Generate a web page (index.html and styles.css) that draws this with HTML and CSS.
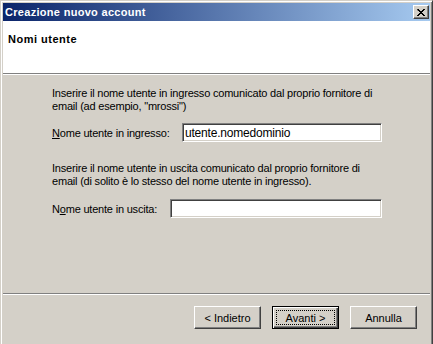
FILE: index.html
```html
<!DOCTYPE html>
<html lang="it">
  <head>
    <meta charset="UTF-8" />
    <title>Creazione nuovo account</title>
    <link rel="stylesheet" href="styles.css">
  </head>
  <body>
    <div class="window">
      <!-- barra del titolo -->
      <div class="titlebar">
        <span class="title">Creazione nuovo account</span>
        <button type="button" class="close-button">
          <svg width="8" height="7" viewBox="0 0 8 7">
            <path d="M0 0h2v1h1v1h2v-1h1v-1h2v1h-1v1h-1v1h-1v1h1v1h1v1h1v1h-2v-1h-1v-1h-2v1h-1v1h-2v-1h1v-1h1v-1h1v-1h-1v-1h-1z" fill="#000"/>
          </svg>
        </button>
      </div>

      <div class="header">
        <h1>Nomi utente</h1>
      </div>

      <div class="content">
        <p class="hint">
          Inserire il nome utente in ingresso comunicato dal proprio fornitore di<br>
          email (ad esempio, "mrossi")
        </p>
        <div class="field field-in">
          <label for="user-in"><u>N</u>ome utente in ingresso:</label>
          <input type="text" id="user-in" value="utente.nomedominio" />
        </div>

        <p class="hint hint-out">
          Inserire il nome utente in uscita comunicato dal proprio fornitore di<br>
          email (di solito è lo stesso del nome utente in ingresso).
        </p>
        <div class="field field-out">
          <label for="user-out">N<u>o</u>me utente in uscita:</label>
          <input type="text" id="user-out" />
        </div>
      </div>

      <div class="footer">
        <button type="button" class="button">&lt; Indietro</button>
        <button type="button" class="button default"><span class="focus">Avanti &gt;</span></button>
        <button type="button" class="button">Annulla</button>
      </div>
    </div>
  </body>
</html>
```

FILE: styles.css
```css
body {
  margin: 0;
  padding: 0;
  font-family: "Liberation Sans", Arial, sans-serif;
  font-size: 11px;
  background: #d4d0c8;
}

.window {
  width: 433px;
  height: 344px;
  box-sizing: border-box;
  display: flex;
  flex-direction: column;
  background: #d4d0c8;
  border-top: 1px solid #d4d0c8;
  border-left: 1px solid #d4d0c8;
  border-right: 1px solid #404040;
  box-shadow: inset 1px 1px #fff, inset -1px 0 #808080;
  padding: 2px 2px 0 2px;
}

/* barra del titolo con sfumatura classica */
.titlebar {
  height: 18px;
  display: flex;
  align-items: center;
  justify-content: space-between;
  background: linear-gradient(to right, #0a246a, #a6caf0);
  padding: 0 1px 0 2px;
}

.title {
  color: white;
  font-weight: bold;
  letter-spacing: 0.3px;
}

.close-button {
  width: 16px;
  height: 14px;
  padding: 0;
  display: flex;
  align-items: center;
  justify-content: center;
  background: #d4d0c8;
  border: 1px solid;
  border-color: #fff #404040 #404040 #fff;
  box-shadow: inset -1px -1px #808080;
}

.header {
  height: 53px;
  background: white;
  border-bottom: 1px solid #808080;
  padding: 12px 0 0 5px;
  box-sizing: border-box;
}

h1 {
  margin: 0;
  font-size: 11px;
  line-height: 13px;
  letter-spacing: 0.5px;
}

.content {
  flex: 1;
  border-top: 1px solid #fff;
  padding: 12px 0 0 49px;
}

.hint {
  margin: 0;
  line-height: 13px;
  letter-spacing: -0.2px;
  white-space: nowrap;
}

.hint-out {
  margin-top: 20px;
}

.field {
  display: flex;
  align-items: center;
  margin-top: 10px;
}

.field-out {
  margin-top: 11px;
}

label {
  letter-spacing: -0.2px;
}

.field-in label {
  width: 130px;
}

.field-out label {
  width: 118px;
}

input {
  height: 19px;
  box-sizing: border-box;
  padding: 0 2px;
  margin: 0;
  font-family: "Liberation Sans", Arial, sans-serif;
  font-size: 12px;
  letter-spacing: -0.2px;
  color: black;
  background: white;
  border: 1px solid;
  border-color: #808080 #fff #fff #808080;
  box-shadow: inset 1px 1px #404040, inset -1px -1px #d4d0c8;
  outline: none;
}

.field-in input {
  width: 200px;
}

.field-out input {
  width: 212px;
}

.footer {
  height: 51px;
  box-sizing: border-box;
  border-top: 1px solid #808080;
  box-shadow: inset 0 1px #fff;
  display: flex;
  justify-content: flex-end;
  align-items: flex-start;
  gap: 11px;
  padding: 12px 13px 0 0;
}

.button {
  width: 67px;
  height: 23px;
  padding: 0;
  margin: 0;
  font-family: "Liberation Sans", Arial, sans-serif;
  font-size: 11px;
  color: black;
  background: #d4d0c8;
  border: 1px solid;
  border-color: #fff #404040 #404040 #fff;
  box-shadow: inset -1px -1px #808080;
}

.default {
  border: 1px solid #000;
  box-shadow: inset 1px 1px #fff, inset -1px -1px #404040, inset -2px -2px #808080;
  display: flex;
  align-items: stretch;
  padding: 3px;
}

.focus {
  flex: 1;
  display: flex;
  align-items: center;
  justify-content: center;
  border: 1px dotted #000;
}
```
